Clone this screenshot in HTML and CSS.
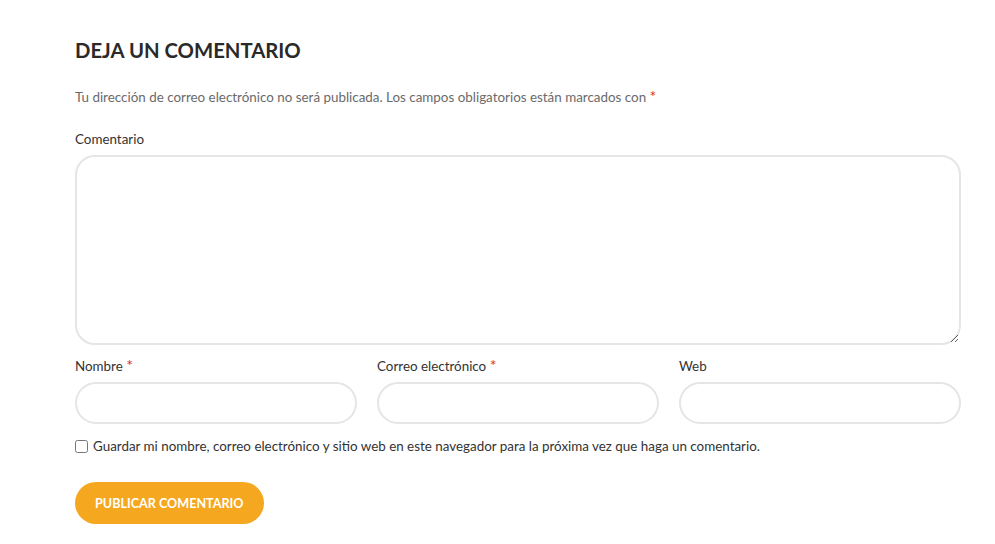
FILE: index.html
```html
<!DOCTYPE html>
<html lang="es">
<head>
    <meta charset="UTF-8">
    <title>Deja un comentario</title>
    <link rel="stylesheet" href="styles.css">
</head>
<body>
<div class="respond">
    <h3 class="reply-title">Deja un comentario</h3>
    <p class="comment-notes">Tu dirección de correo electrónico no será publicada. Los campos obligatorios están marcados con <span class="required">*</span></p>

    <form class="comment-form">
        <div class="field field-comment">
            <label for="comment">Comentario</label>
            <textarea id="comment" rows="8"></textarea>
        </div>

        <div class="field-row">
            <div class="field">
                <label for="author">Nombre <span class="required">*</span></label>
                <input id="author" type="text">
            </div>
            <div class="field">
                <label for="email">Correo electrónico <span class="required">*</span></label>
                <input id="email" type="email">
            </div>
            <div class="field">
                <label for="url">Web</label>
                <input id="url" type="url">
            </div>
        </div>

        <div class="cookies-consent">
            <input id="consent" type="checkbox">
            <label for="consent">Guardar mi nombre, correo electrónico y sitio web en este navegador para la próxima vez que haga un comentario.</label>
        </div>

        <div class="form-submit">
            <button type="submit" class="submit">Publicar comentario</button>
        </div>
    </form>
</div>
</body>
</html>
```

FILE: styles.css
```css
* {
    margin: 0;
    padding: 0;
    box-sizing: border-box;
}

body {
    background: #fff;
    font-family: Lato, "Open Sans", sans-serif;
    font-size: 13.4px;
    color: #333;
}

.respond {
    width: 886px;
    margin-left: 75px;
    padding-top: 38px;
}

.reply-title {
    font-size: 20.3px;
    line-height: 25px;
    font-weight: 700;
    text-transform: uppercase;
    color: #2a2a2a;
}

.comment-notes {
    margin-top: 24px;
    line-height: 20px;
    color: #6a6a6a;
}

.required {
    color: #d9312e;
    font-size: 16px;
    line-height: 1;
}

.comment-form {
    margin-top: 22px;
}

.field {
    display: flex;
    flex-direction: column;
}

.field label {
    height: 20px;
    line-height: 20px;
    margin-bottom: 6px;
    color: #333;
}

.field textarea,
.field input {
    width: 100%;
    border: 2px solid #e5e5e5;
    background: #fff;
    font-family: inherit;
    font-size: 13px;
    outline: none;
}

.field textarea {
    height: 190px;
    border-radius: 20px;
    padding: 10px 16px;
}

.field input {
    height: 42px;
    border-radius: 21px;
    padding: 0 16px;
}

.field-row {
    display: grid;
    grid-template-columns: repeat(3, 1fr);
    gap: 20px;
    margin-top: 11px;
}

.cookies-consent {
    display: flex;
    align-items: center;
    gap: 5px;
    margin-top: 12px;
    line-height: 20px;
    color: #333;
}

.cookies-consent input {
    margin: 0;
    width: 13px;
    height: 13px;
}

.form-submit {
    margin-top: 26px;
}

.submit {
    height: 42px;
    padding: 0 20px;
    border: none;
    border-radius: 21px;
    background: #f5a81f;
    color: #fff;
    font-family: inherit;
    font-size: 12.6px;
    font-weight: 700;
    text-transform: uppercase;
    cursor: pointer;
}
```
